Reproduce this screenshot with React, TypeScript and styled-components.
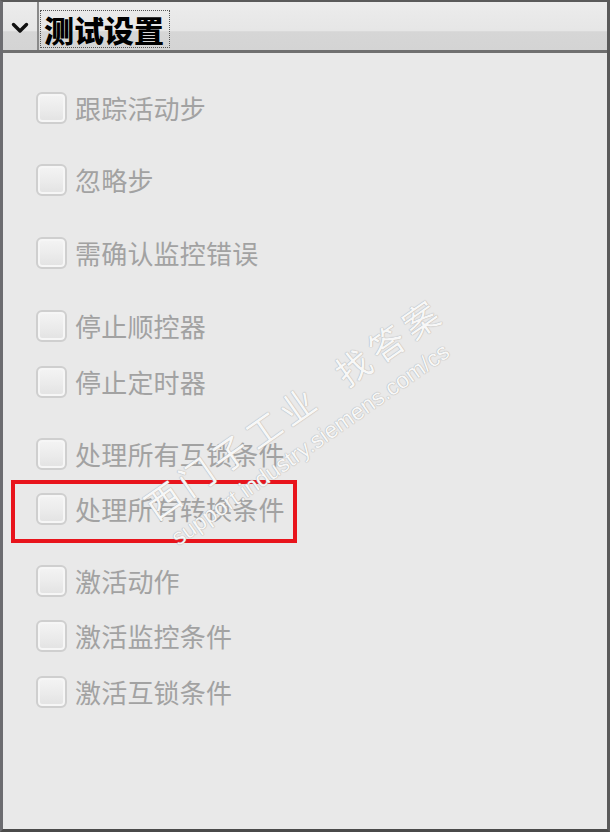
import React from "react";
import styled, { createGlobalStyle } from "styled-components";

const GlobalStyle = createGlobalStyle`
  html, body {
    margin: 0;
    padding: 0;
    background: #e9e9e9;
  }
  * {
    box-sizing: border-box;
  }
`;

const Frame = styled.div`
  position: relative;
  width: 610px;
  height: 832px;
  background: #e9e9e9;
  border-top: 2px solid #5a5a5a;
  border-left: 3px solid #6c6c70;
  border-right: 3px solid #5a5a5a;
  border-bottom: 3px solid #4a4a4a;
  overflow: hidden;
  font-family: "Noto Sans CJK SC", "Noto Sans", sans-serif;
`;

const Header = styled.div`
  display: flex;
  align-items: stretch;
  height: 51px;
  background: linear-gradient(#ececec 0%, #e6e6e6 60%, #d6d6d6 62%, #d4d4d4 100%);
  border-bottom: 3px solid #707070;
`;

const ToggleCell = styled.div`
  display: flex;
  align-items: center;
  justify-content: center;
  width: 36px;
  padding-top: 4px;
  border-right: 2px solid #8a8a8a;
`;

const TitleBox = styled.div`
  display: flex;
  align-items: center;
  margin: 8px 0 2px 1px;
  padding: 0 5px 0 3px;
  border: 1px dotted #555;
  font-size: 30px;
  font-weight: 900;
  color: #000;
  line-height: 1;
`;

const List = styled.div`
  display: flex;
  flex-direction: column;
  padding-left: 33px;
`;

const Row = styled.div<{ $top: number }>`
  position: relative;
  display: flex;
  align-items: center;
  gap: 8px;
  height: 32px;
  margin-top: ${(p) => p.$top}px;
`;

const Box = styled.div`
  width: 31px;
  height: 32px;
  border: 2px solid #cfcfcf;
  border-radius: 6px;
  background: linear-gradient(#f4f4f4 0%, #ececec 50%, #e2e2e2 100%);
  box-shadow: inset 0 0 0 2px #f6f6f6;
`;

const Label = styled.span`
  font-size: 26px;
  color: #a2a2a2;
  line-height: 1;
  letter-spacing: 0.2px;
`;

const Highlight = styled.div`
  position: absolute;
  left: -25px;
  top: -13px;
  width: 286px;
  height: 63px;
  border: 4px solid #e8141c;
  pointer-events: none;
`;

const Watermark = styled.div`
  position: absolute;
  left: 128px;
  top: 496px;
  transform: rotate(-35deg);
  transform-origin: left center;
  display: flex;
  flex-direction: column;
  color: #f7f7f7;
  text-shadow: 0 0 1px #aaaaaa, 0 0 1px #b4b4b4;
  pointer-events: none;
`;

const MarkTitle = styled.span`
  font-family: "Noto Sans CJK SC", sans-serif;
  font-size: 35px;
  letter-spacing: 6px;
  white-space: pre;
  padding-left: 30px;
`;

const MarkUrl = styled.span`
  font-family: "Liberation Sans", Arial, sans-serif;
  font-size: 23px;
  white-space: pre;
  margin-top: 2px;
  padding-left: 34px;
`;

const items: { text: string; top: number; marked?: boolean }[] = [
  { text: "跟踪活动步", top: 39 },
  { text: "忽略步", top: 40 },
  { text: "需确认监控错误", top: 41 },
  { text: "停止顺控器", top: 41 },
  { text: "停止定时器", top: 24 },
  { text: "处理所有互锁条件", top: 40 },
  { text: "处理所有转换条件", top: 23, marked: true },
  { text: "激活动作", top: 40 },
  { text: "激活监控条件", top: 23 },
  { text: "激活互锁条件", top: 24 },
];

const Chevron = () => (
  <svg width="18" height="12" viewBox="0 0 18 12">
    <path d="M2.5 2.5 L9 9 L15.5 2.5" fill="none" stroke="#111" strokeWidth="3.4" strokeLinecap="round" strokeLinejoin="round" />
  </svg>
);

const App: React.FC = () => {
  return (
    <Frame>
      <GlobalStyle />
      <Header>
        <ToggleCell>
          <Chevron />
        </ToggleCell>
        <TitleBox>测试设置</TitleBox>
      </Header>
      <List>
        {items.map((item) => (
          <Row key={item.text} $top={item.top}>
            <Box />
            <Label>{item.text}</Label>
            {item.marked && <Highlight />}
          </Row>
        ))}
      </List>
      <Watermark>
        <MarkTitle>{"西门子工业  找答案"}</MarkTitle>
        <MarkUrl>support.industry.siemens.com/cs</MarkUrl>
      </Watermark>
    </Frame>
  );
};

export default App;
